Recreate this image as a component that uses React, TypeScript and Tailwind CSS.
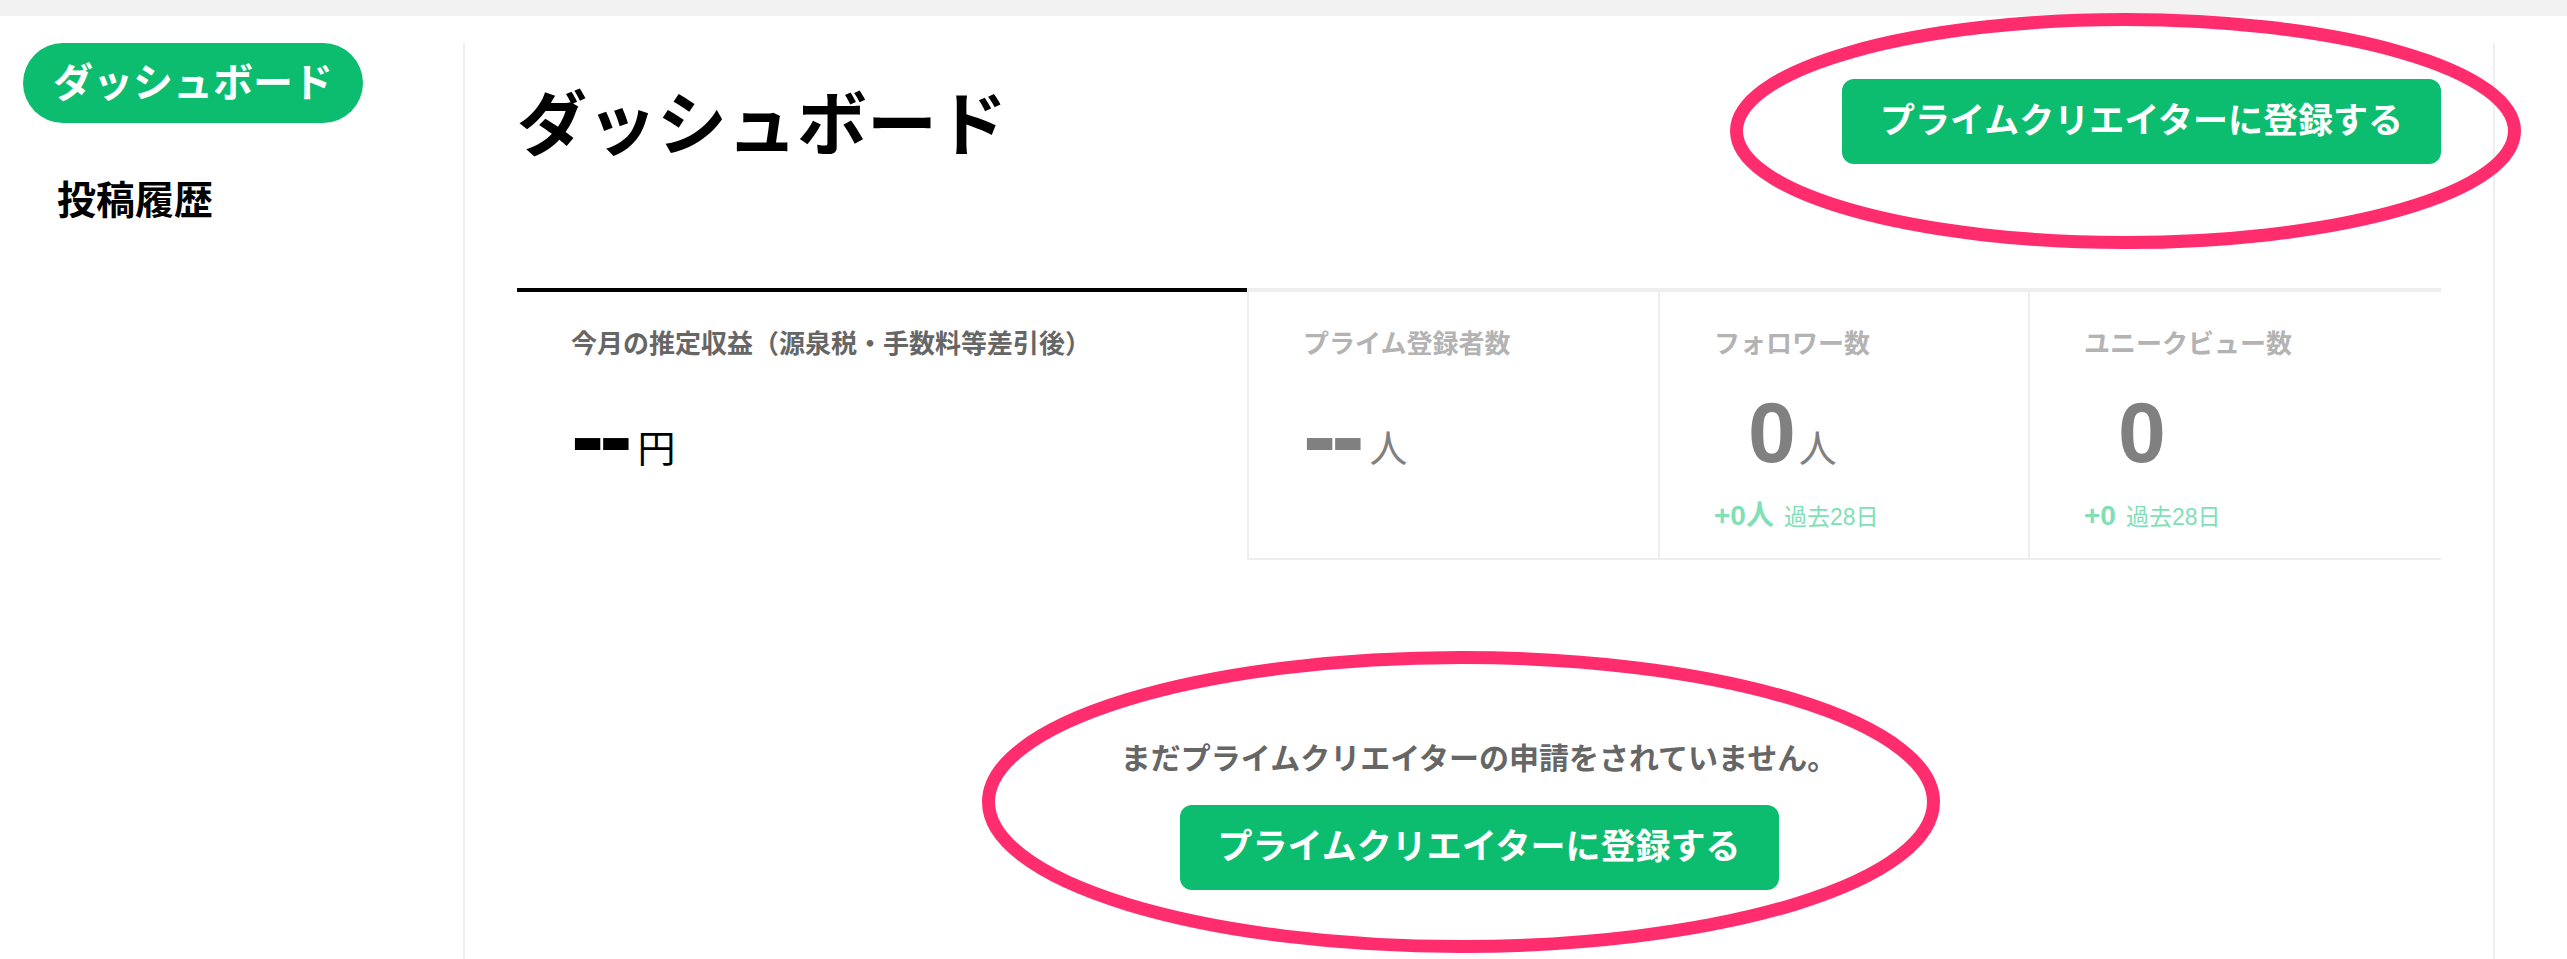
const green = "bg-[#0cbd70]";

function StatLabel({ children, dark }: { children: React.ReactNode; dark?: boolean }) {
  return (
    <div
      className={`whitespace-nowrap text-[26px] font-bold leading-[30px] ${
        dark ? "text-[#666666]" : "text-[#b3b3b3]"
      }`}
    >
      {children}
    </div>
  );
}

function Growth({ value }: { value: string }) {
  return (
    <div className="mt-[25px] whitespace-nowrap text-[28px] leading-[28px] text-[#80dfb5]">
      <span className="font-bold">{value}</span>
      <span className="ml-[10px] text-[23px] font-normal">過去28日</span>
    </div>
  );
}

export default function App() {
  return (
    <div className="relative min-h-screen overflow-hidden bg-white font-['Liberation_Sans','Noto_Sans_CJK_JP',sans-serif]">
      {/* top strip */}
      <div className="h-[16px] bg-[#f2f2f2]" />

      <div className="flex pt-[27px]">
        {/* side menu */}
        <aside className="w-[463px] shrink-0 pl-[23px]">
          <div
            className={`flex h-[80px] w-[340px] items-center justify-center rounded-full ${green} text-[40px] font-bold leading-none text-white`}
          >
            ダッシュボード
          </div>
          <div className="ml-[34px] mt-[58px] text-[39px] font-bold leading-[40px] text-black">
            投稿履歴
          </div>
        </aside>

        {/* main column */}
        <main className="mr-[72px] min-h-[916px] flex-1 border-x-2 border-[#eeeeee] px-[52px] pt-[36px]">
          <div className="flex items-start justify-between">
            <h1 className="mt-[12px] text-[70px] font-bold leading-[70px] text-black">
              ダッシュボード
            </h1>
            <button
              className={`h-[85px] w-[599px] rounded-[12px] ${green} text-[35px] font-bold text-white`}
            >
              プライムクリエイターに登録する
            </button>
          </div>

          {/* stats */}
          <div className="mt-[124px] flex h-[272px]">
            <div className="w-[730px] shrink-0 border-t-4 border-black pl-[54px] pt-[37px]">
              <StatLabel dark>今月の推定収益（源泉税・手数料等差引後）</StatLabel>
              <div className="mt-[18px] h-[100px] whitespace-nowrap text-[100px] leading-[100px] text-black">
                <span className="align-[-8px] font-bold tracking-[-5px]">--</span>
                <span className="ml-[10px] text-[38px] font-normal leading-none">円</span>
              </div>
            </div>

            <div className="w-[411px] shrink-0 border-b-2 border-l-2 border-t-4 border-[#eeeeee] pl-[54px] pt-[37px]">
              <StatLabel>プライム登録者数</StatLabel>
              <div className="mt-[18px] h-[100px] whitespace-nowrap text-[100px] leading-[100px] text-[#808080]">
                <span className="align-[-8px] font-bold tracking-[-5px]">--</span>
                <span className="ml-[10px] text-[38px] font-normal leading-none">人</span>
              </div>
            </div>

            <div className="w-[370px] shrink-0 border-b-2 border-l-2 border-t-4 border-[#eeeeee] pl-[54px] pt-[37px]">
              <StatLabel>フォロワー数</StatLabel>
              <div className="mt-[18px] h-[100px] whitespace-nowrap text-[100px] leading-[100px] text-[#808080]">
                <span className="ml-[34px] text-[86px] font-bold leading-none">0</span>
                <span className="ml-[3px] text-[38px] font-normal leading-none">人</span>
              </div>
              <Growth value="+0人" />
            </div>

            <div className="flex-1 border-b-2 border-l-2 border-t-4 border-[#eeeeee] pl-[54px] pt-[37px]">
              <StatLabel>ユニークビュー数</StatLabel>
              <div className="mt-[18px] h-[100px] whitespace-nowrap text-[100px] leading-[100px] text-[#808080]">
                <span className="ml-[34px] text-[86px] font-bold leading-none">0</span>
              </div>
              <Growth value="+0" />
            </div>
          </div>

          {/* empty state */}
          <div className="mt-[184px] flex flex-col items-center">
            <p className="text-[30px] font-bold leading-[30px] text-[#666666]">
              まだプライムクリエイターの申請をされていません。
            </p>
            <button
              className={`mt-[31px] h-[85px] w-[599px] rounded-[12px] ${green} text-[35px] font-bold text-white`}
            >
              プライムクリエイターに登録する
            </button>
          </div>
        </main>
      </div>

      {/* hand-drawn highlight circles */}
      <svg
        className="pointer-events-none absolute left-[1730px] top-[13px]"
        width="791"
        height="236"
        viewBox="0 0 791 236"
      >
        <ellipse cx="395.5" cy="118" rx="389" ry="111.5" fill="none" stroke="#ff2d6e" strokeWidth="13" />
      </svg>
      <svg
        className="pointer-events-none absolute left-[982px] top-[651px]"
        width="958"
        height="302"
        viewBox="0 0 958 302"
      >
        <ellipse cx="479" cy="151" rx="472.5" ry="144.5" fill="none" stroke="#ff2d6e" strokeWidth="13" />
      </svg>
    </div>
  );
}
